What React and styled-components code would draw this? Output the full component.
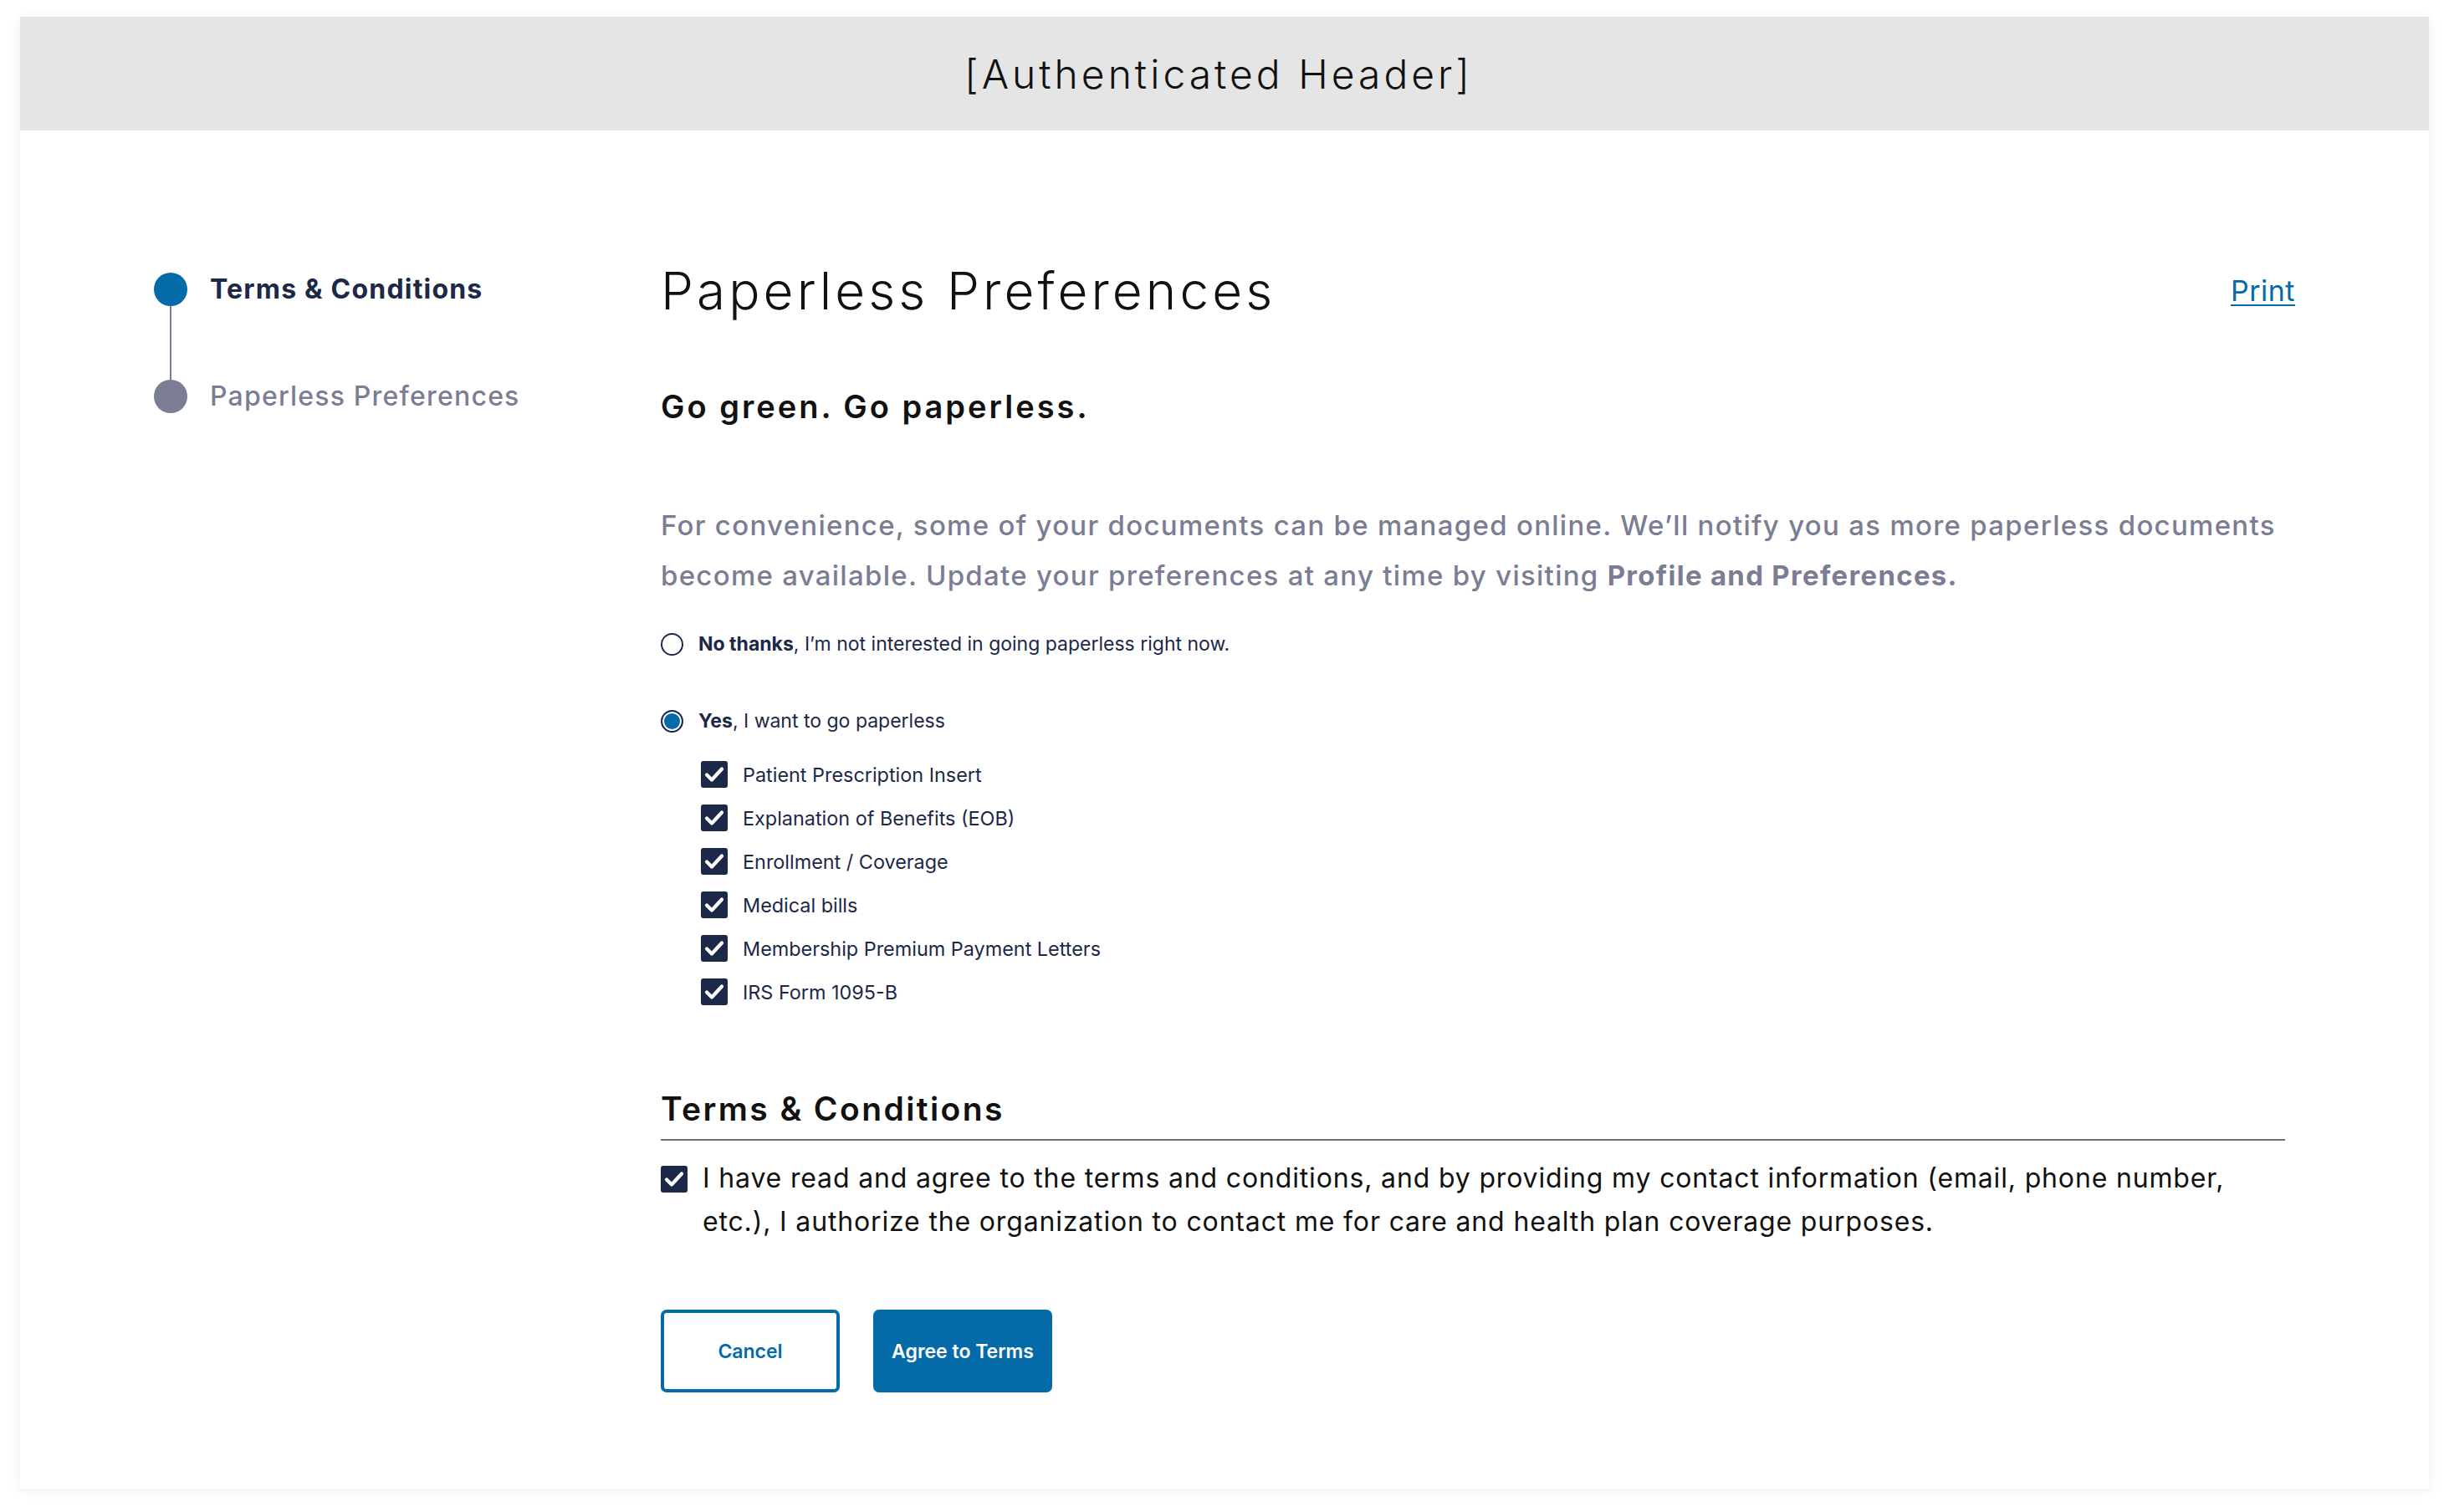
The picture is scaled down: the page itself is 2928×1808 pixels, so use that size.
import styled, { createGlobalStyle } from 'styled-components'

const GlobalStyle = createGlobalStyle`
  html, body {
    margin: 0;
    padding: 0;
    background: #ffffff;
    overflow: hidden;
  }
  body {
    font-family: Inter, 'Noto Sans', 'Liberation Sans', sans-serif;
    color: #111;
  }
  * { box-sizing: border-box; }
`

const navy = '#1c2848'
const blue = '#046aa8'
const slate = '#7a7d93'

const documents = [
  'Patient Prescription Insert',
  'Explanation of Benefits (EOB)',
  'Enrollment / Coverage',
  'Medical bills',
  'Membership Premium Payment Letters',
  'IRS Form 1095-B',
]

const Check = () => (
  <svg width='32' height='32' viewBox='0 0 32 32' aria-hidden='true'>
    <polyline
      points='7,16.5 13,22.5 25,9.5'
      fill='none'
      stroke='#fff'
      strokeWidth='4.2'
      strokeLinecap='round'
      strokeLinejoin='round'
    />
  </svg>
)

const App = () => {
  return (
    <>
      <GlobalStyle />
      <Card>
        <Header>[Authenticated Header]</Header>
        <Body>
          <Stepper>
            <Step>
              <Marker>
                <Dot active />
                <Connector />
              </Marker>
              <StepLabel active>Terms &amp; Conditions</StepLabel>
            </Step>
            <Step>
              <Marker>
                <Dot />
              </Marker>
              <StepLabel>Paperless Preferences</StepLabel>
            </Step>
          </Stepper>

          <Content>
            <TitleRow>
              <Title>Paperless Preferences</Title>
              <PrintLink href='#'>Print</PrintLink>
            </TitleRow>

            <Subtitle>Go green. Go paperless.</Subtitle>

            <Intro>
              For convenience, some of your documents can be managed online.
              We’ll notify you as more paperless documents become available.
              Update your preferences at any time by visiting{' '}
              <strong>Profile and Preferences.</strong>
            </Intro>

            <RadioRow>
              <Radio type='radio' name='paperless' />
              <RadioText>
                <b>No thanks</b>, I’m not interested in going paperless right now.
              </RadioText>
            </RadioRow>

            <RadioRow spaced>
              <Radio type='radio' name='paperless' defaultChecked />
              <RadioText>
                <b>Yes</b>, I want to go paperless
              </RadioText>
            </RadioRow>

            <DocList>
              {documents.map((doc) => (
                <DocRow key={doc}>
                  <Box>
                    <Check />
                  </Box>
                  <DocText>{doc}</DocText>
                </DocRow>
              ))}
            </DocList>

            <SectionTitle>Terms &amp; Conditions</SectionTitle>
            <Rule />

            <AgreeRow>
              <Box>
                <Check />
              </Box>
              <AgreeText>
                I have read and agree to the terms and conditions, and by
                providing my contact information (email, phone number, etc.), I
                authorize the organization to contact me for care and health plan
                coverage purposes.
              </AgreeText>
            </AgreeRow>

            <Actions>
              <Button>Cancel</Button>
              <Button primary>Agree to Terms</Button>
            </Actions>
          </Content>
        </Body>
      </Card>
    </>
  )
}

const Card = styled.div`
  width: 2880px;
  height: 1760px;
  margin: 20px 24px 28px;
  background: #fff;
  box-shadow: 0 2px 14px rgba(0, 0, 0, 0.07);
  display: flex;
  flex-direction: column;
`

const Header = styled.header`
  height: 136px;
  background: #e5e5e5;
  display: flex;
  align-items: center;
  justify-content: center;
  padding-right: 14px;
  font-size: 48px;
  font-weight: 300;
  letter-spacing: 4px;
  color: #111;
`

const Body = styled.main`
  display: flex;
  align-items: flex-start;
  padding: 156px 160px 0;
`

const Stepper = styled.ol`
  width: 606px;
  flex-shrink: 0;
  margin: 14px 0 0;
  padding: 0;
  list-style: none;
`

const Step = styled.li`
  display: flex;
  gap: 27px;
`

const Marker = styled.div`
  display: flex;
  flex-direction: column;
  align-items: center;
  width: 40px;
`

const Dot = styled.span`
  width: 40px;
  height: 40px;
  border-radius: 50%;
  background: ${(p) => (p.active ? blue : slate)};
`

const Connector = styled.span`
  width: 2px;
  height: 88px;
  background: ${slate};
`

const StepLabel = styled.span`
  line-height: 40px;
  font-size: 32px;
  font-weight: ${(p) => (p.active ? 700 : 500)};
  letter-spacing: 1.2px;
  color: ${(p) => (p.active ? navy : slate)};
`

const Content = styled.section`
  flex: 1;
  display: flex;
  flex-direction: column;
  align-items: flex-start;
`

const TitleRow = styled.div`
  align-self: stretch;
  display: flex;
  justify-content: space-between;
  align-items: center;
`

const Title = styled.h1`
  margin: 0;
  font-size: 62px;
  line-height: 72px;
  font-weight: 300;
  letter-spacing: 4.1px;
  color: #111;
`

const PrintLink = styled.a`
  font-size: 34px;
  line-height: 40px;
  color: ${blue};
  text-decoration: underline;
  text-decoration-thickness: 2px;
  text-underline-offset: 4px;
  letter-spacing: 0.5px;
`

const Subtitle = styled.h2`
  margin: 79px 0 0;
  font-size: 38px;
  line-height: 46px;
  font-weight: 600;
  letter-spacing: 3px;
  color: #111;
`

const Intro = styled.p`
  margin: 89px 0 0;
  font-size: 33px;
  line-height: 60px;
  font-weight: 500;
  letter-spacing: 1.28px;
  color: ${slate};

  strong {
    font-weight: 700;
  }
`

const RadioRow = styled.label`
  display: flex;
  align-items: center;
  gap: 18px;
  height: 36px;
  margin-top: ${(p) => (p.spaced ? '56px' : '34px')};
`

const Radio = styled.input`
  appearance: none;
  width: 27px;
  height: 27px;
  margin: 0;
  border: 2px solid ${navy};
  border-radius: 50%;
  background: #fff;

  &:checked {
    background: ${blue};
    box-shadow: inset 0 0 0 2px #fff;
  }
`

const RadioText = styled.span`
  font-size: 23px;
  color: ${navy};

  b {
    font-weight: 700;
  }
`

const DocList = styled.ul`
  margin: 20px 0 0 48px;
  padding: 0;
  list-style: none;
`

const DocRow = styled.li`
  display: flex;
  align-items: center;
  gap: 18px;
  height: 52px;
`

const Box = styled.span`
  flex-shrink: 0;
  width: 32px;
  height: 32px;
  border-radius: 3px;
  background: ${navy};
  display: flex;
`

const DocText = styled.span`
  font-size: 23.4px;
  color: ${navy};
`

const SectionTitle = styled.h3`
  margin: 90px 0 0;
  font-size: 39px;
  line-height: 48px;
  font-weight: 600;
  letter-spacing: 2.4px;
  color: #111;
`

const Rule = styled.hr`
  align-self: stretch;
  margin: 12px 12px 0 0;
  border: 0;
  height: 2px;
  background: #707070;
`

const AgreeRow = styled.label`
  display: flex;
  align-items: flex-start;
  gap: 18px;
  margin-top: 19px;

  ${Box} {
    margin-top: 11px;
  }
`

const AgreeText = styled.p`
  margin: 0;
  max-width: 1880px;
  font-size: 32px;
  line-height: 52px;
  letter-spacing: 0.84px;
  color: #111;
`

const Actions = styled.div`
  display: flex;
  gap: 40px;
  margin-top: 79px;
`

const Button = styled.button`
  width: 214px;
  height: 99px;
  border: 4px solid ${blue};
  border-radius: 7px;
  background: ${(p) => (p.primary ? blue : '#fff')};
  color: ${(p) => (p.primary ? '#fff' : blue)};
  font-family: inherit;
  font-size: 23px;
  font-weight: 600;
  cursor: pointer;
`

export default App
